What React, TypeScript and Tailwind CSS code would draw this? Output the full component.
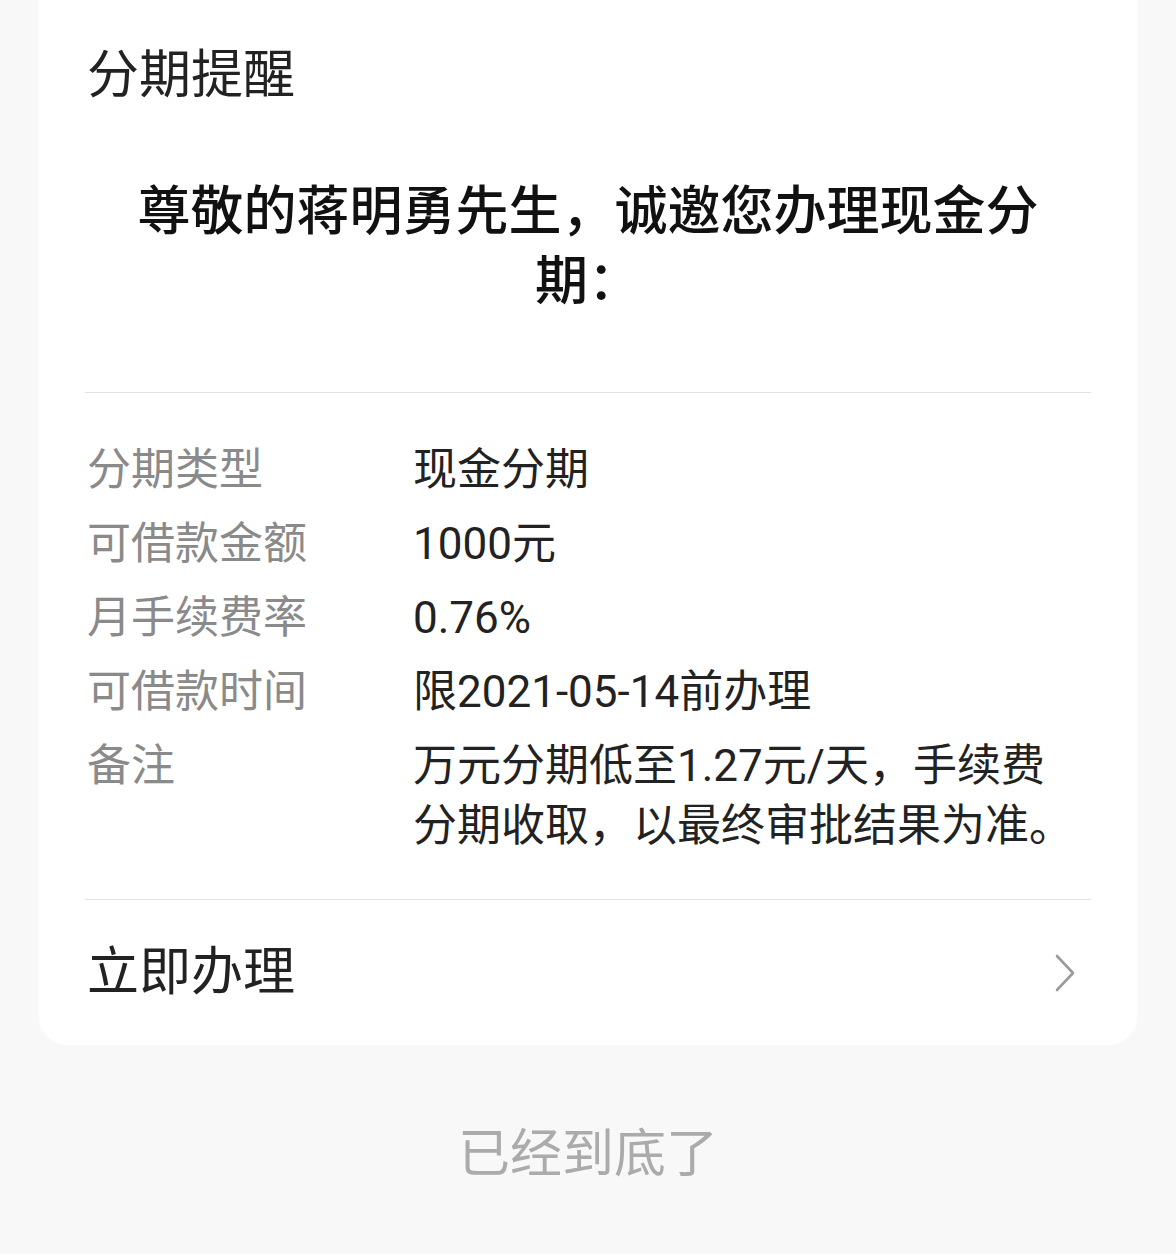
import React from "react";

const rows: { label: string; value: string }[] = [
  { label: "分期类型", value: "现金分期" },
  { label: "可借款金额", value: "1000元" },
  { label: "月手续费率", value: "0.76%" },
  { label: "可借款时间", value: "限2021-05-14前办理" },
  { label: "备注", value: "万元分期低至1.27元/天，手续费分期收取，以最终审批结果为准。" },
];

export default function App() {
  return (
    <div
      className="min-h-[1254px] bg-[#f8f8f8] px-[39px]"
      style={{ fontFamily: 'Roboto, "Noto Sans CJK SC", sans-serif' }}
    >
      <div className="bg-white rounded-b-[28px] px-[48px] pt-[40px]">
        <div className="text-[52px] leading-[72px] text-[#222]">分期提醒</div>
        <div className="mt-[65px] mx-auto max-w-[940px] text-center text-[53px] leading-[70px] font-medium text-[#111]">
          尊敬的蒋明勇先生，诚邀您办理现金分期：
        </div>
        <div className="mt-[75px] -mx-[2px] border-t border-[#e2e2e2]" />
        <div className="pt-[47px] flex flex-col gap-[14px]">
          {rows.map((r) => (
            <div key={r.label} className="flex text-[44px] leading-[60px]">
              <div className="w-[326px] shrink-0 text-[#8a8a8a]">{r.label}</div>
              <div className="w-[664px] text-[#222]">{r.value}</div>
            </div>
          ))}
        </div>
        <div className="mt-[43px] -mx-[2px] border-t border-[#e2e2e2]" />
        <div className="h-[145px] flex items-center justify-between">
          <div className="text-[52px] leading-[72px] text-[#222]">立即办理</div>
          <svg width="24" height="40" viewBox="0 0 24 40" className="mr-[12px]">
            <path d="M4 3 L20 20 L4 37" fill="none" stroke="#9a9a9a" strokeWidth="2.6" strokeLinecap="round" strokeLinejoin="round" />
          </svg>
        </div>
      </div>
      <div className="mt-[74px] text-center text-[52px] leading-[72px] text-[#ababab]">已经到底了</div>
    </div>
  );
}
